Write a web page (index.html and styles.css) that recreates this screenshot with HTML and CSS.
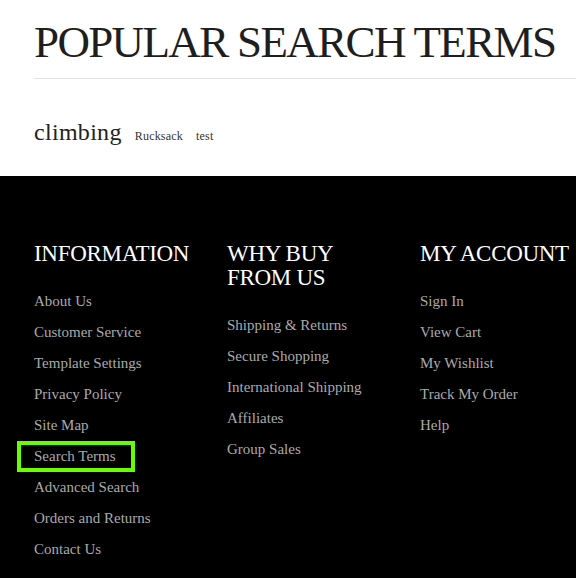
FILE: index.html
```html
<!DOCTYPE html>
<html lang="en">
<head>
  <meta charset="UTF-8" />
  <meta name="viewport" content="width=device-width, initial-scale=1.0"/>
  <title>Popular Search Terms</title>
  <link rel="stylesheet" href="styles.css">
</head>
<body>
  <main class="search-terms">
    <h1 class="page-title">POPULAR SEARCH TERMS</h1>
    <ul class="term-cloud">
      <li><a href="#" class="term term-lg">climbing</a></li>
      <li><a href="#" class="term">Rucksack</a></li>
      <li><a href="#" class="term">test</a></li>
    </ul>
  </main>

  <footer class="site-footer">
    <div class="footer-cols">
      <div class="footer-col">
        <h3>INFORMATION</h3>
        <ul>
          <li><a href="#">About Us</a></li>
          <li><a href="#">Customer Service</a></li>
          <li><a href="#">Template Settings</a></li>
          <li><a href="#">Privacy Policy</a></li>
          <li><a href="#">Site Map</a></li>
          <li><a href="#" class="highlight">Search Terms</a></li>
          <li><a href="#">Advanced Search</a></li>
          <li><a href="#">Orders and Returns</a></li>
          <li><a href="#">Contact Us</a></li>
        </ul>
      </div>
      <div class="footer-col">
        <h3>WHY BUY<br>FROM US</h3>
        <ul>
          <li><a href="#">Shipping &amp; Returns</a></li>
          <li><a href="#">Secure Shopping</a></li>
          <li><a href="#">International Shipping</a></li>
          <li><a href="#">Affiliates</a></li>
          <li><a href="#">Group Sales</a></li>
        </ul>
      </div>
      <div class="footer-col">
        <h3>MY ACCOUNT</h3>
        <ul>
          <li><a href="#">Sign In</a></li>
          <li><a href="#">View Cart</a></li>
          <li><a href="#">My Wishlist</a></li>
          <li><a href="#">Track My Order</a></li>
          <li><a href="#">Help</a></li>
        </ul>
      </div>
    </div>
  </footer>
</body>
</html>
```

FILE: styles.css
```css
* {
  box-sizing: border-box;
}

body {
  margin: 0;
  font-family: 'Liberation Serif', 'Times New Roman', serif;
  background: #fff;
  color: #222;
  overflow-x: hidden;
}

a {
  text-decoration: none;
}

ul {
  list-style: none;
  margin: 0;
  padding: 0;
}

.search-terms {
  padding-left: 34px;
}

.page-title {
  margin: 0;
  padding: 20px 0 13px;
  font-size: 45px;
  font-weight: normal;
  line-height: 45px;
  letter-spacing: -1.65px;
  color: #1e1e1e;
  border-bottom: 1px solid #e4e4e4;
  white-space: nowrap;
}

.term-cloud {
  display: flex;
  align-items: baseline;
  gap: 13px;
  padding: 41px 0 32px;
}

.term {
  font-size: 12px;
  line-height: 12px;
  color: #333;
  letter-spacing: 0.2px;
}

.term-lg {
  font-size: 24px;
  line-height: 24px;
  letter-spacing: 0.3px;
  color: #222;
}

.site-footer {
  background: #000;
  padding: 66px 0 40px 34px;
}

.footer-cols {
  display: grid;
  grid-template-columns: 193px 193px 1fr;
}

.footer-col h3 {
  margin: 0 0 20px;
  font-size: 23px;
  font-weight: normal;
  line-height: 24px;
  letter-spacing: -0.3px;
  color: #fff;
  white-space: nowrap;
}

.footer-col li {
  font-size: 15px;
  line-height: 31px;
}

.footer-col a {
  color: #aaa;
}

.footer-col a.highlight {
  display: inline-block;
  margin-left: -17px;
  padding: 0 19px 0 17px;
  outline: 4px solid #66ff00;
  outline-offset: -4px;
}
```
